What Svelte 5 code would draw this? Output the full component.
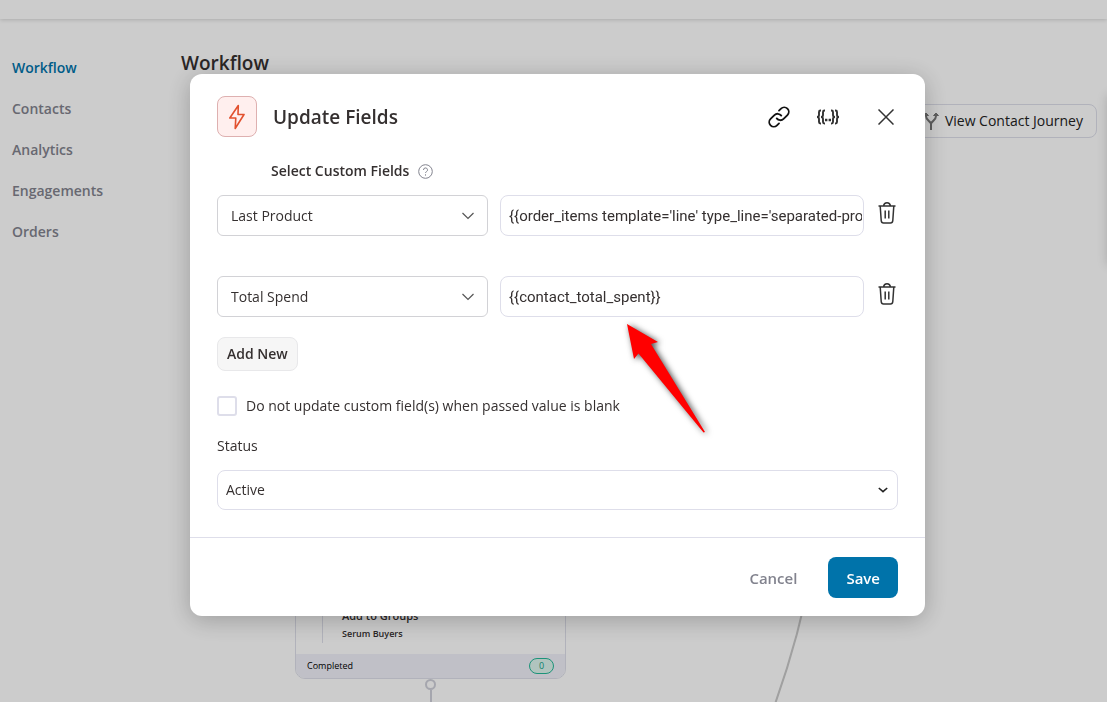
<script lang="ts">
	const nav = ['Workflow', 'Contacts', 'Analytics', 'Engagements', 'Orders'];
	const options = ['Last Product', 'Total Spend'];

	let active = $state('Workflow');
	let rows = $state([
		{ field: 'Last Product', value: "{{order_items template='line' type_line='separated-products'}}" },
		{ field: 'Total Spend', value: '{{contact_total_spent}}' }
	]);
	let skipBlank = $state(false);
	let status = $state('Active');

	function addRow() {
		rows.push({ field: 'Last Product', value: '' });
	}

	function removeRow(i: number) {
		rows.splice(i, 1);
	}
</script>

<div class="page">
	<header class="topbar"></header>

	<div class="layout">
		<nav class="sidebar" aria-label="Automation">
			{#each nav as item (item)}
				<a href="#{item.toLowerCase()}" class:active={active === item} onclick={() => (active = item)}>{item}</a>
			{/each}
		</nav>

		<main>
			<h1>Workflow</h1>
			<div class="actions">
				<button class="journey" type="button">
					<svg width="20" height="20" viewBox="0 0 20 20" fill="none" stroke="#777" stroke-width="2">
						<path d="M10 19v-6c0-3-5-3-5-8V3M10 13c0-3 5-3 5-8V3" />
						<path d="M2.500 4.500h5L5 2zM12.500 4.500h5L15 2z" fill="#777" stroke-width="1" />
					</svg>
					View Contact Journey
				</button>
			</div>

			<div class="canvas">
				<svg class="edge" width="80" height="140" viewBox="0 0 80 140" fill="none" stroke="#c8c8c8" stroke-width="2">
					<path d="M56 0Q44 68 19 138" />
				</svg>
				<article class="node">
					<div class="node-body">
						<span class="rule"></span>
						<div>
							<h2>Add to Groups</h2>
							<p>Serum Buyers</p>
						</div>
					</div>
					<footer>
						<span>Completed</span>
						<span class="count">0</span>
					</footer>
				</article>
				<span class="port"></span>
			</div>
		</main>
	</div>
	<aside class="drawer"></aside>
</div>

<div class="backdrop">
	<div class="modal" role="dialog" aria-modal="true" aria-labelledby="modal-title">
		<div class="content">
			<div class="head">
				<span class="badge">
					<svg width="16" height="26" viewBox="0 0 16 26" fill="none" stroke="#e2512f" stroke-width="1.600" stroke-linejoin="round">
						<path d="M9.300 1.500L.8 14h6L6.200 24.500 15 10.500H9z" />
					</svg>
				</span>
				<h2 id="modal-title">Update Fields</h2>
				<div class="tools">
					<button type="button" aria-label="Link">
						<svg width="22" height="22" viewBox="0 0 24 24" fill="none" stroke="#111" stroke-width="2" stroke-linecap="round" stroke-linejoin="round">
							<path d="M9.500 13.500a5 5 0 0 0 7.500.600l4.200-4.200a4.900 4.900 0 0 0-7-7L12 5" />
							<path d="M14.500 10.500a5 5 0 0 0-7.500-.600l-4.200 4.200a4.900 4.900 0 0 0 7 7L12 19" />
						</svg>
					</button>
					<button type="button" aria-label="Merge tags">
						<svg width="24" height="16" viewBox="0 0 24 16" fill="none" stroke="#333" stroke-width="1.900">
							<path d="M5 1.500h-.5q-1.500 0-1.500 1.500v3Q3 8 1 8q2 0 2 2v3q0 1.500 1.500 1.500H5" />
							<path d="M9 1.500h-.5q-1.500 0-1.500 1.500v3Q7 8 5 8q2 0 2 2v3q0 1.500 1.500 1.500H9" />
							<path d="M19 1.500h.5q1.500 0 1.500 1.500v3q0 2 2 2-2 0-2 2v3q0 1.500-1.500 1.500H19" />
							<path d="M15 1.500h.5q1.500 0 1.500 1.500v3q0 2 2 2-2 0-2 2v3q0 1.500-1.500 1.500H15" />
							<path d="M9 11h2.400M12.600 11H15" stroke-width="2.400" />
						</svg>
					</button>
					<button class="close" type="button" aria-label="Close">
						<svg width="16" height="16" viewBox="0 0 16 16" fill="none" stroke="#333" stroke-width="1.500">
							<path d="M.5.5l15 15M15.500.5l-15 15" />
						</svg>
					</button>
				</div>
			</div>

			<div class="caption">
				<span>Select Custom Fields</span>
				<svg width="15" height="15" viewBox="0 0 15 15" fill="none" stroke="#82838e">
					<circle cx="7.500" cy="7.500" r="6.800" />
					<path d="M5.500 6a2 2 0 1 1 2.900 1.700q-.9.500-.9 1.300" />
					<path d="M7.500 10.300v1.300" />
				</svg>
			</div>

			<div class="rows">
				{#each rows as row, i (i)}
					<div class="row">
						<div class="select">
							<select bind:value={row.field} aria-label="Custom field">
								{#each options as option (option)}
									<option>{option}</option>
								{/each}
							</select>
							<svg width="14" height="8" viewBox="0 0 14 8" fill="none" stroke="#555" stroke-width="1.200">
								<path d="M1.500 1L7 6.500 12.500 1" />
							</svg>
						</div>
						<input class="value" type="text" bind:value={row.value} aria-label="Field value" />
						<button class="trash" type="button" aria-label="Remove field" onclick={() => removeRow(i)}>
							<svg width="18" height="22" viewBox="0 0 18 22" fill="none" stroke="#333" stroke-width="1.500">
								<path d="M.5 4h17M5.500 4c.3-2 1.500-3.200 3.500-3.200S12.200 2 12.500 4" />
								<path d="M2.200 4l1 14.500q.2 2.500 2.300 2.500h7q2.100 0 2.300-2.500l1-14.500M7.200 8.500v8M10.800 8.500v8" />
							</svg>
						</button>
					</div>
				{/each}
			</div>

			<button class="add" type="button" onclick={addRow}>Add New</button>

			<label class="check">
				<input type="checkbox" bind:checked={skipBlank} />
				Do not update custom field(s) when passed value is blank
			</label>

			<label class="status-label" for="status">Status</label>
			<div class="select status">
				<select id="status" bind:value={status}>
					<option>Active</option>
					<option>Inactive</option>
				</select>
				<svg width="10" height="6" viewBox="0 0 10 6" fill="none" stroke="#222" stroke-width="1.600">
					<path d="M.8 1L5 4.600 9.200 1" />
				</svg>
			</div>
		</div>

		<div class="foot">
			<button class="cancel" type="button">Cancel</button>
			<button class="save" type="button">Save</button>
		</div>

		<svg class="pointer" width="96" height="130" viewBox="0 0 96 130" aria-hidden="true">
			<path d="M7 8L38 26l-7 2 54 88-1.500.5L18.500 37.500 14 43z" fill="#f00" />
		</svg>
	</div>
</div>

<style>
	:global(body) {
		margin: 0;
		background: #fff;
	}
	.page,
	.backdrop,
	button,
	select {
		font-family: 'Open Sans', 'Noto Sans', sans-serif;
		font-size: 14px;
		line-height: 20px;
		color: #353030;
	}
	.page,
	.page *,
	.backdrop * {
		box-sizing: border-box;
	}
	h1,
	h2,
	p {
		margin: 0;
	}
	button {
		display: flex;
		align-items: center;
		justify-content: center;
		padding: 0;
		border: 0;
		background: none;
		cursor: pointer;
	}
	svg {
		display: block;
	}

	.page {
		position: relative;
		display: flex;
		flex-direction: column;
		height: 100vh;
		overflow: hidden;
	}
	.topbar {
		height: 19px;
		flex: none;
		box-shadow: 0 1px 4px rgba(0, 0, 0, 0.16);
	}
	.layout {
		flex: 1;
		display: grid;
		grid-template-columns: 169px 1fr;
		padding: 32px 10px 0 12px;
	}
	.sidebar {
		display: flex;
		flex-direction: column;
		gap: 21px;
		padding-top: 7px;
	}
	.sidebar a {
		font-weight: 600;
		line-height: 20px;
		color: #82838e;
		text-decoration: none;
	}
	.sidebar a.active {
		color: #0073aa;
	}
	main {
		display: flex;
		flex-direction: column;
	}
	h1 {
		font-size: 19px;
		font-weight: 600;
		line-height: 24px;
	}
	.actions {
		display: flex;
		justify-content: flex-end;
		padding-top: 29px;
	}
	.journey {
		gap: 4px;
		height: 34px;
		padding: 0 13px;
		border: 1px solid #dedfea;
		border-radius: 8px;
		color: #222;
	}
	.canvas {
		position: relative;
		flex: 1;
	}
	.edge {
		position: absolute;
		left: 575px;
		bottom: -4px;
	}
	.node {
		position: absolute;
		left: 114px;
		bottom: 23px;
		width: 271px;
		border: 1px solid #dedfea;
		border-radius: 10px;
		overflow: hidden;
	}
	.node-body {
		display: flex;
		gap: 19px;
		padding: 12px 26px 11px;
	}
	.rule {
		width: 1px;
		background: #dedfea;
	}
	.node h2 {
		font-size: 11px;
		font-weight: 600;
		line-height: 18px;
	}
	.node p {
		font-size: 9px;
		font-weight: 600;
		line-height: 18px;
	}
	.node footer {
		display: flex;
		align-items: center;
		justify-content: space-between;
		height: 24px;
		padding: 0 11px;
		background: #f0f1f9;
		font-size: 9px;
		color: #000;
	}
	.count {
		width: 25px;
		border: 1px solid #24b898;
		border-radius: 8px;
		background: #dcf5ee;
		line-height: 14px;
		text-align: center;
		color: #12a386;
	}
	.port {
		position: absolute;
		left: 244px;
		bottom: 12px;
		width: 11px;
		height: 11px;
		border: 2px solid #cfd0da;
		border-radius: 50%;
	}
	.port::after {
		content: '';
		position: absolute;
		top: 9px;
		left: 3px;
		width: 2px;
		height: 14px;
		background: #cfd0da;
	}
	.drawer {
		position: absolute;
		top: 95px;
		left: 100%;
		width: 200px;
		height: 170px;
		box-shadow: 0 0 10px rgba(0, 0, 0, 0.16);
	}

	.backdrop {
		position: fixed;
		inset: 0;
		display: flex;
		align-items: flex-start;
		justify-content: center;
		padding: 74px 0 0 8px;
		background: rgba(0, 0, 0, 0.2);
	}
	.modal {
		position: relative;
		width: 67%;
		max-width: 735px;
		border-radius: 12px;
		background: #fff;
		box-shadow: 0 4px 24px rgba(0, 0, 0, 0.24);
	}
	.content {
		padding: 22px 27px 27px;
	}
	.head {
		display: flex;
		align-items: center;
		gap: 16px;
	}
	.badge {
		display: grid;
		place-items: center;
		width: 40px;
		height: 41px;
		border: 1px solid #deb0b0;
		border-radius: 8px;
		background: #ffefee;
	}
	.head h2 {
		font-size: 19px;
		font-weight: 600;
		line-height: 24px;
	}
	.tools {
		display: flex;
		align-items: center;
		gap: 26px;
		margin-left: auto;
		padding-right: 4px;
	}
	.close {
		margin-left: 12px;
	}
	.caption {
		display: flex;
		align-items: center;
		gap: 9px;
		padding: 24px 0 14px 54px;
		font-weight: 600;
	}
	.rows {
		display: grid;
		gap: 40px;
	}
	.row {
		display: grid;
		grid-template-columns: 271fr 364fr 22px;
		align-items: center;
		gap: 12px;
	}
	.select {
		display: grid;
		grid-template-columns: 1fr auto;
		align-items: center;
	}
	.select select {
		grid-area: 1 / 1 / 2 / 3;
		width: 100%;
		height: 41px;
		padding: 0 13px;
		border: 1px solid #d2d2d6;
		border-radius: 6px;
		background: #fff;
		appearance: none;
	}
	.select svg {
		grid-area: 1 / 2;
		margin-right: 13px;
		pointer-events: none;
	}
	.value {
		width: 100%;
		height: 41px;
		padding: 0 1px 0 8px;
		border: 1px solid #dedeea;
		border-radius: 8px;
		background: #fff;
		font-family: Roboto, sans-serif;
		font-size: 15px;
		color: #353030;
	}
	.trash {
		padding-bottom: 5px;
	}
	.add {
		height: 34px;
		margin-top: 20px;
		padding: 0 9px;
		border: 1px solid #e8e8ea;
		border-radius: 8px;
		background: #f6f6f6;
		font-weight: 600;
	}
	.check {
		display: flex;
		align-items: center;
		gap: 9px;
		margin-top: 25px;
	}
	.check input {
		width: 20px;
		height: 20px;
		margin: 0;
		border: 2px solid #dedeea;
		border-radius: 3px;
		background: #fff;
		appearance: none;
	}
	.check input:checked {
		background: #0073aa;
	}
	.status-label {
		display: block;
		margin: 20px 0 14px;
	}
	.status select {
		height: 40px;
		padding: 0 8px;
		border-color: #dedeea;
		border-radius: 8px;
	}
	.status svg {
		margin-right: 10px;
	}
	.foot {
		display: flex;
		justify-content: flex-end;
		gap: 31px;
		padding: 19px 27px 18px;
		border-top: 1px solid #dedeea;
	}
	.foot button {
		font-size: 15px;
		font-weight: 600;
	}
	.cancel {
		color: #82838e;
	}
	.save {
		height: 41px;
		padding: 0 18px;
		border-radius: 8px;
		background: #0073aa;
		color: #fff;
	}
	.pointer {
		position: absolute;
		top: 242px;
		left: 430px;
		filter: drop-shadow(2px 1px 3px rgba(0, 0, 0, 0.7));
		pointer-events: none;
	}
</style>
